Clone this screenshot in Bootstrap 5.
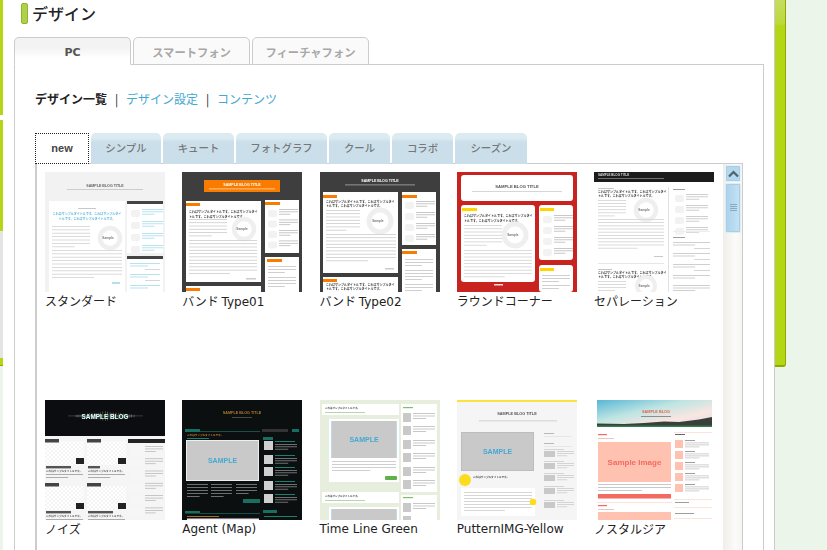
<!DOCTYPE html>
<html lang="ja">
<head>
    <meta charset="UTF-8">
    <meta name="viewport" content="width=device-width, initial-scale=1.0">
    <title>デザイン</title>
    <link href="https://cdn.jsdelivr.net/npm/bootstrap@5.3.0/dist/css/bootstrap.min.css" rel="stylesheet">
    <style>
        html, body {
            height: 550px;
            overflow: hidden;
        }
        body {
            background: #ecf5ea;
            font-family: "Noto Sans CJK JP", "DejaVu Sans", sans-serif;
            font-size: 12px;
            color: #222;
        }
        .page-wrap {
            height: 550px;
        }
        .left-strip {
            width: 3px;
            flex: none;
        }
        .strip-green { background: #b4d614; }
        .strip-notch { background: #fff; height: 5px; }
        .strip-grey { background: #e4e4e4; height: 127px; }
        .strip-end { height: 8px; border-bottom: 1px solid #8fa800; }
        .strip-pale { flex: 1; }
        .main-col {
            width: 772px;
            flex: none;
            background: #fff;
            border-right: 1px solid #ccc;
            padding: 3px 11px 0 11px;
        }
        .right-bar {
            width: 11px;
            height: 367px;
            flex: none;
            background: linear-gradient(#c6dc62 0, #bcd93a 24px, #b4d614 26px);
            border-right: 1px solid #8fa800;
            border-bottom: 2px solid #8fa800;
            border-bottom-right-radius: 3px;
        }
        .page-title {
            height: 21px;
            margin: 0 0 13px 7px;
            font-size: 16px;
            line-height: 21px;
            font-weight: 500;
            color: #222;
        }
        .title-pill {
            width: 7px;
            height: 21px;
            background: #afd04a;
            border: 1px solid #8fb32c;
            border-radius: 2px;
            margin-right: 4px;
        }
        .top-tabs {
            border-bottom: 0;
            gap: 2px;
            position: relative;
            z-index: 1;
        }
        .top-tabs .nav-link {
            width: 117px;
            height: 28px;
            padding: 0;
            margin: 0;
            text-align: center;
            line-height: 29px;
            font-size: 11.3px;
            font-weight: 700;
            color: #a8a8a8;
            background: #fafafa;
            border: 1px solid #ccc;
            border-radius: 5px 5px 0 0;
        }
        .top-tabs .nav-link.active {
            color: #555;
            font-size: 11px;
            font-family: "DejaVu Sans", sans-serif;
            background: linear-gradient(#f3f3f3 0, #f3f3f3 10px, #fff 20px);
            border-color: #ccc #ccc #fff;
        }
        .tab-panel {
            width: 750px;
            height: 490px;
            margin-top: -1px;
            border: 1px solid #ccc;
            border-bottom: 0;
            padding: 25px 20px 0 20px;
        }
        .sub-links {
            height: 17px;
            line-height: 17px;
            font-size: 12px;
            margin-bottom: 26px;
        }
        .sub-links b { color: #222; }
        .sub-links a {
            color: #3fa9cf;
            text-decoration: none;
        }
        .sub-links .sep {
            width: 19px;
            text-align: center;
            color: #222;
        }
        .inner-tabs {
            border-bottom: 0;
            gap: 2px;
            height: 31px;
        }
        .inner-tabs .nav-link {
            height: 31px;
            padding: 0;
            margin: 0;
            text-align: center;
            line-height: 30px;
            font-size: 10.4px;
            font-weight: 500;
            color: #777;
            background: linear-gradient(#dcebf1 0, #dcebf1 5px, #cbdfeb 9px);
            border: 0;
            border-radius: 5px 5px 0 0;
        }
        .inner-tabs .nav-link.active {
            color: #444;
            font-size: 11px;
            font-weight: 700;
            font-family: "Liberation Sans", sans-serif;
            background: #fff;
            border-radius: 0;
            outline: 1px dotted #222;
            outline-offset: -1px;
        }
        .tw-new { width: 54px; }
        .tw-simple { width: 70px; }
        .tw-cute { width: 71px; }
        .tw-photo { width: 91px; }
        .tw-cool { width: 61px; }
        .tw-collab { width: 61px; }
        .tw-season { width: 72px; }
        .list-box {
            width: 708px;
            height: 400px;
            margin-top: -1px;
            border: 1px solid #ccc;
            border-bottom: 0;
            border-left-width: 2px;
            background: #fff;
        }
        .thumb-grid {
            flex: 1;
            display: grid;
            grid-template-columns: repeat(5, 137.25px);
            grid-auto-rows: 228px;
            padding: 8px 0 0 8px;
            overflow: hidden;
        }
        .thumb-box {
            width: 120px;
            height: 120px;
            overflow: hidden;
        }
        .thumb-box svg {
            display: block;
            width: 120px;
            height: 120px;
            filter: blur(.3px);
        }
        .thumb-label {
            height: 16px;
            line-height: 16px;
            margin-top: 1px;
            white-space: nowrap;
            font-size: 12px;
            color: #222;
        }
        .lat {
            font-family: "DejaVu Sans", sans-serif;
        }
        .fake-scroll {
            width: 19px;
            flex: none;
            background: linear-gradient(90deg, #efeeea, #fbfbf9 65%, #f5f5f3);
            padding: 1px 1px 0 2px;
        }
        .scroll-btn {
            height: 17px;
            background: #b5d8ee;
            border: 1px solid #e4f2fa;
            outline: 1px solid #a8cde4;
            outline-offset: -2px;
            border-radius: 2px;
        }
        .scroll-thumb {
            height: 50px;
            margin-top: 1px;
            background: linear-gradient(90deg, #a9d2ec, #c6e2f3);
            border: 1px solid #dcedf7;
            outline: 1px solid #a8cde4;
            outline-offset: -2px;
            border-radius: 2px;
        }
    </style>
</head>
<body>
    <div class="page-wrap d-flex">
        <div class="left-strip d-flex flex-column">
            <div class="strip-green" style="height: 115px"></div>
            <div class="strip-notch"></div>
            <div class="strip-green" style="height: 111px"></div>
            <div class="strip-grey"></div>
            <div class="strip-green strip-end"></div>
            <div class="strip-pale"></div>
        </div>

        <div class="main-col">
            <h1 class="page-title d-flex align-items-center">
                <span class="title-pill"></span>デザイン
            </h1>

            <ul class="nav nav-tabs top-tabs">
                <li class="nav-item"><a class="nav-link active" href="#">PC</a></li>
                <li class="nav-item"><a class="nav-link" href="#">スマートフォン</a></li>
                <li class="nav-item"><a class="nav-link" href="#">フィーチャフォン</a></li>
            </ul>

            <div class="tab-panel">
                <div class="sub-links d-flex">
                    <b>デザイン一覧</b><span class="sep">|</span><a href="#">デザイン設定</a><span class="sep">|</span><a href="#">コンテンツ</a>
                </div>

                <ul class="nav nav-tabs inner-tabs">
                    <li class="nav-item"><a class="nav-link active tw-new" href="#">new</a></li>
                    <li class="nav-item"><a class="nav-link tw-simple" href="#">シンプル</a></li>
                    <li class="nav-item"><a class="nav-link tw-cute" href="#">キュート</a></li>
                    <li class="nav-item"><a class="nav-link tw-photo" href="#">フォトグラフ</a></li>
                    <li class="nav-item"><a class="nav-link tw-cool" href="#">クール</a></li>
                    <li class="nav-item"><a class="nav-link tw-collab" href="#">コラボ</a></li>
                    <li class="nav-item"><a class="nav-link tw-season" href="#">シーズン</a></li>
                </ul>

                <div class="list-box d-flex">
                    <div class="thumb-grid">
                        <div class="thumb-item"><div class="thumb-box" id="t0"></div><div class="thumb-label">スタンダード</div></div>
                        <div class="thumb-item"><div class="thumb-box" id="t1"></div><div class="thumb-label">バンド <span class="lat">Type01</span></div></div>
                        <div class="thumb-item"><div class="thumb-box" id="t2"></div><div class="thumb-label">バンド <span class="lat">Type02</span></div></div>
                        <div class="thumb-item"><div class="thumb-box" id="t3"></div><div class="thumb-label">ラウンドコーナー</div></div>
                        <div class="thumb-item"><div class="thumb-box" id="t4"></div><div class="thumb-label">セパレーション</div></div>
                        <div class="thumb-item"><div class="thumb-box" id="t5"></div><div class="thumb-label">ノイズ</div></div>
                        <div class="thumb-item"><div class="thumb-box" id="t6"></div><div class="thumb-label lat">Agent (Map)</div></div>
                        <div class="thumb-item"><div class="thumb-box" id="t7"></div><div class="thumb-label lat">Time Line Green</div></div>
                        <div class="thumb-item"><div class="thumb-box" id="t8"></div><div class="thumb-label lat">PutternIMG-Yellow</div></div>
                        <div class="thumb-item"><div class="thumb-box" id="t9"></div><div class="thumb-label">ノスタルジア</div></div>
                    </div>
                    <div class="fake-scroll">
                        <div class="scroll-btn d-flex align-items-center justify-content-center">
                            <svg width="11" height="8" viewBox="0 0 11 8"><path d="M1 6.5 5.5 2 10 6.5" fill="none" stroke="#4d6470" stroke-width="2.2"/></svg>
                        </div>
                        <div class="scroll-thumb d-flex align-items-center justify-content-center">
                            <svg width="7" height="8" viewBox="0 0 7 8"><path d="M0 .5h7M0 2.5h7M0 4.5h7M0 6.5h7" stroke="#8fa9ba" stroke-width="1"/></svg>
                        </div>
                    </div>
                </div>
            </div>
        </div>

        <div class="right-bar"></div>
    </div>

    <script>
        // サムネイル描画用のヘルパー
        const R = (x, y, w, h, c, r) => `<rect x="${x}" y="${y}" width="${w}" height="${h}" fill="${c}"${r ? ` rx="${r}"` : ''}/>`;
        const T = (x, y, s, c, size, a = 'middle', w = 700) =>
            `<text x="${x}" y="${y}" fill="${c}" font-size="${size}" text-anchor="${a}" font-weight="${w}" font-family="Liberation Sans, sans-serif">${s}</text>`;
        // 記事タイトル(実際のテキスト)
        const J = (x, y, s, c, size, a = 'start') =>
            `<text x="${x}" y="${y}" fill="${c}" font-size="${size}" text-anchor="${a}" font-weight="700" font-family="Noto Sans CJK JP, sans-serif">${s}</text>`;
        const H = (x, y, step, c, size = 3, a = 'start') =>
            J(x, y, 'これはサンプルタイトルです。これはサンプルタイ', c, size, a) +
            J(x, y + step, 'トルです。これはサンプルタイトルです。', c, size, a);
        // 本文の細かい文字は線で代用
        const L = (x, y, w, n, step, c) => {
            let s = '';
            for (let i = 0; i < n; i++) {
                s += R(x, y + i * step, i === n - 1 ? w * 0.6 : w, 0.8, c);
            }
            return s;
        };
        const ring = (cx, cy, r) =>
            `<circle cx="${cx}" cy="${cy}" r="${r}" fill="none" stroke="#efefef" stroke-width="${r * 0.45}"/>` +
            T(cx - r * 0.2, cy + 1, 'Sample', '#777', 3.2);
        const items = (x, y, n, step, tw, tc, box = '#f2f2f2') => {
            let s = '';
            for (let i = 0; i < n; i++) {
                s += R(x, y + i * step, 9, 7, box, 2) + L(x + 11, y + i * step - 1, tw, 3, 2.4, tc);
            }
            return s;
        };
        const svg = (inner) => `<svg viewBox="0 0 120 120">${inner}</svg>`;
        const sample = (x, y, w, h, size = 7) =>
            R(x, y, w, h, '#c9c9c9') + T(x + w / 2, y + h / 2 + size * 0.36, 'SAMPLE', '#45a9d4', size);

        const thumbs = [];

        // スタンダード
        thumbs[0] = R(0, 0, 120, 120, '#f2f2f2') +
            T(60, 14.5, 'SAMPLE BLOG TITLE', '#666', 3.6) + R(22, 17, 76, 1, '#ccc') +
            R(4, 29, 76, 91, '#fff') + R(33, 36, 18, 0.8, '#bbb') +
            H(42, 42.5, 5, '#55b4d6', 3, 'middle') +
            ring(65, 66, 10) + L(7, 54, 38, 7, 3.4, '#d2d2d2') + L(7, 78, 70, 9, 3.4, '#d2d2d2') +
            R(67, 110, 8, 2, '#b4e0ec') +
            R(82, 29, 36, 52, '#fff') + R(82, 29, 36, 3, '#444') + items(86, 38, 4, 12, 21, '#a4dcea') +
            R(82, 84, 36, 36, '#fff') + R(82, 84, 36, 3, '#444') + L(85, 91, 30, 2, 2.6, '#a4dcea') +
            R(100, 97, 15, 0.8, '#ccc') + L(85, 102, 30, 2, 2.6, '#a4dcea') + R(100, 108, 15, 0.8, '#ccc') + L(85, 113, 30, 2, 2.6, '#a4dcea');

        // バンド Type01
        thumbs[1] = R(0, 0, 120, 120, '#3e3e3e') +
            R(22, 8, 76, 12, '#f97b00') + T(60, 14, 'SAMPLE BLOG TITLE', '#fff', 3.6) + R(27, 16.5, 66, 0.8, '#ffd9a8') +
            R(4, 29, 75, 81, '#fff') + R(4, 31, 14, 3, '#f97b00') +
            H(7, 41, 4.5, '#333') + ring(62, 57, 10) + L(7, 47, 38, 6, 3.3, '#ccc') + L(7, 68, 68, 11, 3.3, '#ccc') +
            R(64, 106, 10, 1.5, '#ccc') +
            R(83, 28, 34, 53, '#fff') + R(83, 30, 15, 3, '#f97b00') + items(86, 38, 4, 10.5, 19, '#bbb') +
            R(83, 85, 34, 35, '#fff') + R(85, 87, 15, 3, '#f97b00') + L(86, 94, 28, 3, 3, '#c4c4c4') + L(86, 105, 28, 4, 3, '#c4c4c4') +
            R(4, 114, 75, 6, '#fff') + R(4, 116, 14, 3, '#f97b00');

        // バンド Type02
        thumbs[2] = R(0, 0, 120, 120, '#3e3e3e') +
            T(60, 10, 'SAMPLE BLOG TITLE', '#fff', 3.6) + R(25, 12.5, 70, 0.8, '#aaa') +
            R(3, 20, 75, 81, '#fff') + R(3, 23, 14, 3, '#f97b00') +
            H(6, 31, 4, '#333') + ring(60, 49, 11) + L(6, 38, 34, 7, 3.3, '#ccc') + L(6, 62, 70, 9, 3.3, '#ccc') +
            R(65, 96, 9, 1.5, '#ccc') +
            R(82, 20, 34, 53, '#fff') + R(82, 23, 15, 3, '#f97b00') + items(85, 30, 4, 11, 19, '#bbb') +
            R(82, 77, 34, 43, '#fff') + R(82, 79, 15, 3, '#f97b00') + L(85, 87, 28, 3, 3, '#c4c4c4') + L(85, 98, 28, 4, 3, '#c4c4c4') + L(85, 112, 28, 3, 3, '#c4c4c4') +
            R(3, 105, 75, 15, '#fff') + R(3, 107, 14, 3, '#f97b00') + H(6, 114, 4, '#333');

        // ラウンドコーナー
        thumbs[3] = R(0, 0, 120, 120, '#c9231f') +
            R(4, 3, 112, 26, '#fff', 3) + T(60, 16, 'SAMPLE BLOG TITLE', '#555', 4.2) + R(15, 19, 90, 0.8, '#ccc') +
            R(4, 33, 74, 77, '#fff', 3) + R(5, 36, 15, 3, '#ffd400') +
            H(7, 45, 5, '#333') + ring(58, 63, 11) + L(7, 53, 38, 7, 3.3, '#d2d2d2') + L(7, 78, 68, 9, 3.3, '#d2d2d2') +
            R(37, 112, 9, 1.5, '#fbdcdb') +
            R(82, 33, 34, 55, '#fff', 3) + R(83, 36, 14, 3, '#ffd400') + items(86, 44, 4, 11, 19, '#bbb') +
            R(82, 93, 34, 27, '#fff', 3) + R(83, 96, 14, 3, '#ffd400') + L(85, 103, 28, 3, 3, '#c4c4c4') + L(85, 113, 28, 2, 3, '#c4c4c4');

        // セパレーション
        thumbs[4] = R(0, 0, 120, 120, '#fff') +
            R(0, 0, 120, 10, '#1c1c1c') + T(4, 4, 'SAMPLE BLOG TITLE', '#ddd', 3, 'start') + R(4, 6, 66, 0.8, '#888') +
            R(4, 16, 16, 0.8, '#bbb') + H(4, 21, 3.8, '#333') + ring(52, 38, 10) + L(4, 28, 28, 6, 3.1, '#d2d2d2') +
            L(4, 47, 66, 10, 3.2, '#d2d2d2') + R(60, 84, 9, 0.8, '#bbb') + R(4, 91, 66, 1, '#e6e6e6') +
            R(4, 97, 14, 0.8, '#bbb') + H(4, 102, 3.5, '#333') + ring(52, 114, 9) + L(4, 109, 28, 4, 3, '#d2d2d2') +
            R(74, 15, 1, 105, '#e2e2e2') +
            R(79, 17, 12, 0.8, '#888') + items(81, 23, 4, 11, 22, '#c4c4c4') + R(79, 59, 37, 1, '#eee') +
            R(79, 65, 12, 0.8, '#888') + L(79, 70, 37, 2, 2.6, '#c4c4c4') + R(100, 76, 16, 0.8, '#ccc') + L(79, 81, 37, 2, 2.6, '#c4c4c4') +
            R(100, 87, 16, 0.8, '#ccc') + L(79, 92, 37, 2, 2.6, '#c4c4c4') + R(100, 98, 16, 0.8, '#ccc') + L(79, 103, 37, 2, 2.6, '#c4c4c4') + L(79, 113, 37, 3, 2.6, '#c4c4c4');

        // ノイズ
        (() => {
            let burst = R(23, 15.7, 75, 0.5, '#667');
            const cols = ['#2a9a9a', '#b84a44', '#a8a030', '#5a9a48', '#889'];
            for (let i = 0; i < 50; i++) {
                const x = 30 + i * 1.2;
                const h = 1 + Math.abs(Math.sin(i * 1.7)) * (9 - Math.abs(i - 25) / 3.2);
                burst += R(x, 16 - h / 2, 0.5, h, cols[i % 5]);
            }
            const card = (x, y, ly, lw) =>
                `<rect x="${x}" y="${y}" width="39" height="24" fill="url(#chk)"/>` +
                R(x, ly, 14, 3.5, '#444') + R(x + 31, y + 17, 8, 6, '#222') + R(x + 1, y + 25, lw, 2.4, '#555') +
                J(x + 1, y + 31, 'これはサンプルタイトルです。', '#555', 2.6) + L(x + 1, y + 33, 37, 2, 3, '#999');
            let side = R(83, 39, 37, 4, '#222');
            for (let i = 0; i < 6; i++) {
                side += R(85, 46 + i * 12.3, 13, 9, '#f6f6f6') + L(100, 46 + i * 12.3, 18, 3, 2.5, '#bbb');
            }
            thumbs[5] = `<defs><pattern id="chk" width="4" height="4" patternUnits="userSpaceOnUse"><rect width="4" height="4" fill="#fff"/><rect width="2" height="2" fill="#f5f5f5"/><rect x="2" y="2" width="2" height="2" fill="#f5f5f5"/></pattern></defs>` +
                R(0, 0, 120, 120, '#f5f5f5') + R(0, 0, 120, 36, '#0b0d10') + burst +
                T(60, 19, 'SAMPLE BLOG', '#dff', 6.4) +
                card(0, 41, 39, 25) + card(42, 41, 39, 12) + card(0, 86, 83, 25) + card(42, 86, 83, 25) + side;
        })();

        // Agent (Map)
        thumbs[6] = R(0, 0, 120, 120, '#0b0f10') +
            T(60, 14, 'SAMPLE BLOG TITLE', '#b07a2e', 3.7) + R(50, 17, 20, 0.8, '#555') +
            R(3, 29, 15, 3, '#17705f') + R(18, 31, 60, 0.7, '#17705f') +
            J(5, 35.5, 'これはサンプルタイトルです。', '#c9852e', 2.6) + R(5, 38, 22, 0.8, '#1f9d88') +
            R(4, 40, 73, 41, '#eee') + sample(5, 41, 71, 39, 7) +
            L(5, 84, 21, 5, 3, '#888') + L(29, 84, 21, 5, 3, '#888') + L(54, 84, 21, 4, 3, '#888') +
            R(61, 99, 17, 4, '#17705f') +
            R(3, 111, 15, 2.5, '#17705f') + R(18, 113, 60, 0.7, '#17705f') + R(5, 116, 32, 0.8, '#c9852e') + R(5, 118.5, 72, 1.5, '#eee') +
            R(80, 29, 26, 3, '#333') + R(110, 29, 7, 3, '#17705f') +
            R(81, 37, 10, 3, '#17705f') +
            [41, 55, 67, 81, 94].map(y => R(82, y, 9, 9, '#cfcfcf') + R(93, y, 20, 0.8, '#1f9d88') + L(93, y + 3, 22, 3, 2.4, '#888')).join('') +
            R(81, 110, 14, 3, '#17705f') + R(82, 116, 33, 0.8, '#1f9d88');

        // Time Line Green
        thumbs[7] = R(0, 0, 120, 120, '#e8eedd') +
            R(2, 4, 77, 11, '#fff') + J(5, 8.5, 'これはサンプルタイトルです。', '#444', 2.5) + R(5, 12, 40, 0.8, '#a5cc98') +
            R(9, 19, 70, 63, '#fff') + R(11, 21, 66, 37, '#bcdcec') + sample(12, 21, 64, 37, 7) +
            L(12, 61, 64, 4, 3, '#c4c4c4') + R(65, 76, 12, 4, '#5fb14a', 1) +
            R(2, 92, 77, 11, '#fff') + J(5, 96.5, 'これはサンプルタイトルです。', '#444', 2.5) + R(5, 100, 40, 0.8, '#a5cc98') +
            R(9, 107, 70, 13, '#fff') + R(11, 109, 66, 11, '#bcdcec') + R(12, 109, 64, 11, '#c9c9c9') +
            R(81, 4, 36, 88, '#fff') + R(83, 7, 10, 1.2, '#7fc06c') +
            [13, 26, 40, 53, 67, 80].map(y => R(83, y, 8, 9, '#c9c9c9') + L(93, y, 22, 3, 2.6, '#bbb')).join('') +
            R(81, 95, 36, 25, '#fff') + R(83, 97, 10, 1.2, '#7fc06c') + R(83, 103, 8, 9, '#c9c9c9') + L(93, 103, 22, 3, 2.6, '#bbb') + R(83, 116, 8, 4, '#c9c9c9');

        // PutternIMG-Yellow
        thumbs[8] = R(0, 0, 120, 120, '#f5f5f5') + R(0, 0, 120, 2, '#fbe23c') +
            T(60, 15, 'SAMPLE BLOG TITLE', '#555', 3.8) + R(22, 20, 78, 1.5, '#ddd') +
            R(4, 32, 73, 39, '#bdbdbd') + sample(5, 33, 71, 37, 7) +
            '<circle cx="8" cy="80" r="6" fill="#fbdc1e"/>' + J(16, 78, 'これはサンプルタイトルです。', '#444', 2.6) +
            R(4, 88, 74, 28, '#fff', 1) + L(7, 92, 68, 7, 3, '#ccc') +
            '<circle cx="76" cy="102" r="3.3" fill="#fbdc1e"/>' +
            R(87, 33, 10, 0.8, '#aaa') + R(87, 36, 28, 1, '#e6e6e6') + R(87, 43, 10, 0.8, '#aaa') + R(87, 46, 28, 1, '#e6e6e6') +
            [52, 64, 76, 89, 103].map(y => R(87, y - 3, 20, 0.8, '#ccc') + R(87, y - 1, 11, 6, '#c9c9c9') + L(100, y - 1, 17, 3, 2.2, '#ccc')).join('');

        // ノスタルジア
        thumbs[9] = R(0, 0, 120, 120, '#fff') +
            '<defs><linearGradient id="sky" x1="0" y1="0" x2="1" y2="1"><stop offset="0" stop-color="#58b6d6"/><stop offset=".4" stop-color="#bfe5e2"/><stop offset=".7" stop-color="#f9e6e2"/><stop offset="1" stop-color="#ddd"/></linearGradient></defs>' +
            '<rect x="3" y="0" width="115" height="27" fill="url(#sky)"/>' +
            '<path d="M3 27V23.500L30 24 50 23 70 21.500 85 22 105 19.500 118 17V27Z" fill="#3a3f3a"/>' + R(3, 25.5, 115, 1.5, '#2f7f4f') +
            T(62, 13, 'SAMPLE BLOG', '#e8604c', 3.8) + R(47, 16, 30, 0.8, '#777') +
            R(4, 34, 9, 1.2, '#f36a60') + R(4, 38, 16, 0.8, '#e9b6ae') +
            R(4, 42, 73, 40, '#ffc2b0') + T(40.5, 64.5, 'Sample Image', '#f36a60', 8) +
            L(4, 84, 73, 3, 3, '#bbb') + R(4, 94, 73, 4.5, '#f36a60') +
            R(3, 102, 75, 1, '#fde3de') + R(4, 105, 9, 1.2, '#f36a60') + R(4, 109, 16, 0.8, '#e9b6ae') + R(4, 112, 73, 8, '#ffc2b0') +
            R(80, 32, 38, 1, '#fde3de') + R(81, 34, 10, 1, '#666') +
            [40, 51, 62, 73, 84].map(y => R(81, y, 8, 8, '#ffc2b0') + R(91, y, 10, 0.8, '#888') + L(91, y + 2.5, 24, 3, 2, '#c4c4c4')).join('') +
            R(80, 99, 38, 1, '#fde3de') + R(81, 102, 14, 0.8, '#888') + R(80, 107, 38, 1, '#fde3de') +
            R(81, 113, 19, 0.8, '#888') + R(80, 118, 38, 1, '#fde3de');

        thumbs.forEach((inner, i) => {
            document.getElementById('t' + i).innerHTML = svg(inner);
        });
    </script>
    <script src="https://cdn.jsdelivr.net/npm/bootstrap@5.3.0/dist/js/bootstrap.bundle.min.js"></script>
</body>
</html>
